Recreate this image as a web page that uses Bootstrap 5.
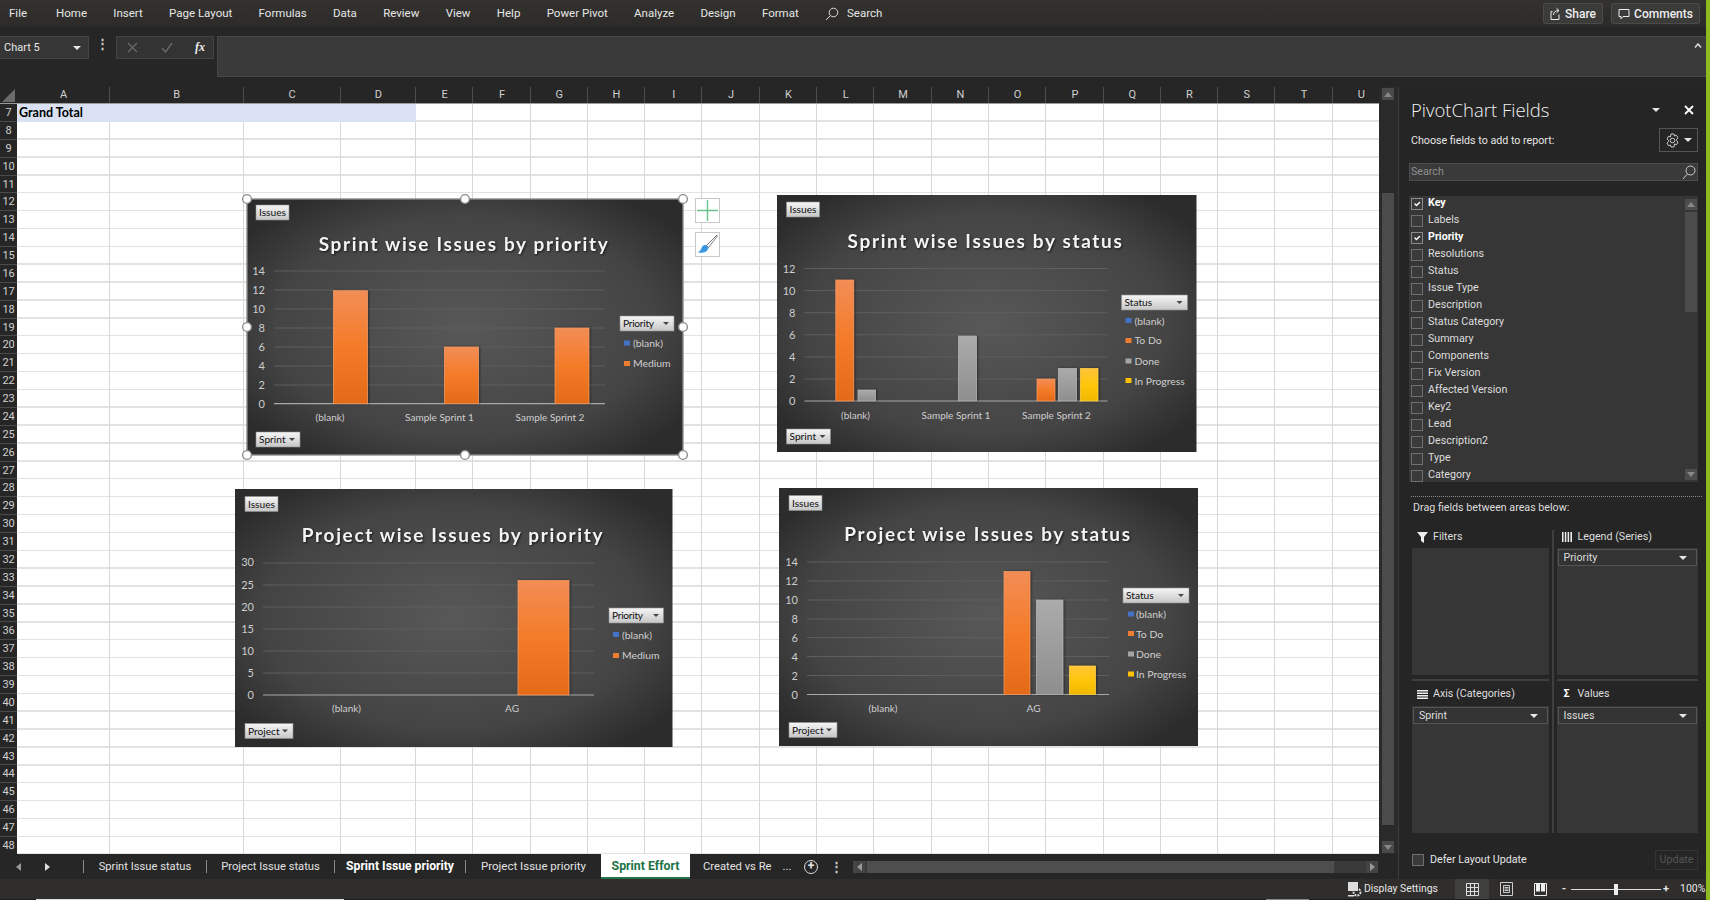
<!DOCTYPE html>
<html lang="en"><head><meta charset="utf-8"><title>Excel</title>
<link href="https://cdn.jsdelivr.net/npm/bootstrap@5.3.0/dist/css/bootstrap.min.css" rel="stylesheet">
<style>
html,body{height:900px;overflow:hidden;background:#262626}
body{font-family:Roboto,"Liberation Sans",sans-serif;font-size:11px;color:#e6e6e6;line-height:1.2}
.app{width:1706px;height:900px}
.edge{width:4px;height:900px;background:#8dbb20}
.ribbon{height:27px;background:linear-gradient(#33322f,#2c2b29);padding-left:9px;box-shadow:0 1px 2px #1a1a1a;font-size:11.5px}
.rib-item{margin-right:26.3px;white-space:nowrap}
.rib-item:first-child{margin-right:29px}
.rib-btn{height:21px;padding:0;background:#3b3b3a;border:1px solid #4a4a49;border-radius:2px;color:#eee;font-size:12px;font-weight:500;line-height:1;gap:4px;justify-content:center}
.rib-share{width:60px;margin-right:8px}
.rib-comments{width:89px;margin-right:6px}
.fbar{height:60px;padding-top:9px;background:#262626}
.namebox{width:89px;height:23px;background:#363636;border:1px solid #444;border-left:0;padding:0 7px 0 4px}
.dots{width:27px;color:#ccc;font-weight:700;font-size:13px;text-align:center}
.fxgrp{width:98px;height:23px;background:#333;border:1px solid #444;padding:0 8px 0 10px}
.fx{font-family:"Liberation Serif",serif;font-size:12px;font-style:italic;color:#eee;font-weight:700}
.fxinput{height:41px;margin:0 0 0 3px;background:#3a3a3a;border:1px solid #474747;border-right:0;flex:1;position:relative}
.caret-up{position:absolute;right:4px;top:6px}
.tri{display:inline-block;width:0;height:0;border-left:4px solid transparent;border-right:4px solid transparent;border-top:4px solid #e6e6e6}
.midrow{height:792px}
.leftcol{width:1398px}
.sheetcol{width:1379px;overflow:hidden}
.colhdr{height:17px;background:#262626;border-bottom:1px solid #9a9a9a}
.corner{flex:0 0 17px;position:relative}
.corner svg{position:absolute;left:2px;top:2px}
.cols{display:flex;overflow:hidden;flex:1}
.cols>div{flex:0 0 57.3px;border-right:1px solid #d6d6d6}
.cols>div:nth-child(1){flex-basis:93px}
.cols>div:nth-child(2){flex-basis:133.5px}
.cols>div:nth-child(3){flex-basis:97px}
.cols>div:nth-child(4){flex-basis:75.5px}
.colhdr .cols>div{border-right-color:#4d4d4d;text-align:center;color:#d0d0d0;line-height:15px;padding-left:1px}
.sheetbody{height:750px}
.rowhdr{flex:0 0 17px;background:#262626;overflow:hidden}
.rowhdr div{height:17.88px;line-height:17.88px;text-align:center;color:#d0d0d0;font-size:11px;border-bottom:1px solid #4a4a4a}
.rowhdr div.rh-narrow{letter-spacing:-.3px}
.canvas{flex:1;background:#fff repeating-linear-gradient(to bottom,transparent 0,transparent 16.4px,#e2e2e2 16.4px,#e2e2e2 17.88px);overflow:hidden}
.canvas .cols{height:100%}
.canvas .cols>div{border-right-color:#d8d8d8}
.gtotal{left:0;top:0;width:399px;height:18px;background:#d9e1f2;color:#000;font:700 12.5px/18px Lato,sans-serif;padding-left:2px}
.chart{position:absolute;overflow:visible}
#c1{left:230px;top:95px;width:436px;height:256px}
#c2{left:759.5px;top:91px;width:419.5px;height:257px}
#c3{left:218px;top:385px;width:437.5px;height:258px}
#c4{left:762px;top:384px;width:419px;height:258px}
.chart text{font-family:Lato,sans-serif}
.gl{stroke:#5f5f5f;stroke-width:1;fill:none}
.ax{stroke:#a8a8a8;stroke-width:1.2}
.tk{font-size:11px;fill:#cdcdcd;text-anchor:end}
.cat{font-size:10px;fill:#cfcfcf;text-anchor:middle}
.lg{font-size:10.4px;fill:#cfcfcf}
.ttl{font-size:19px;font-weight:700;fill:#f4f4f4;text-anchor:middle;letter-spacing:1.65px;filter:drop-shadow(1px 1.5px 1px rgba(0,0,0,.65))}
.fbtn{fill:url(#gbtn);stroke:#8f8f8f;stroke-width:.6}
.bt{font-size:10.2px;fill:#111}
.ftri{fill:#444}
.bar{stroke-width:.8;filter:drop-shadow(1px 0 1px rgba(0,0,0,.45))}
.hd{fill:#fff;stroke:#8d8d8d;stroke-width:1.4}
.toolbtn{width:25px;height:25px;background:#fff;border:1px solid #c8c8c8}
#tb1{left:678px;top:94px}
#tb2{left:678px;top:128px}
.vscroll{width:19px;background:#2a2a2a;padding:1px 4px 0 3px;height:767px}
.arrowbox{height:12px;background:#4a4a4a;display:flex;align-items:center;justify-content:center}
.vthumb{margin-top:93px;height:632px;background:#4b4b4b}
.tabsrow{height:25px;background:#262626;font-size:11.2px}
.navarrows{width:83px;flex:0 0 83px}
.tabsep{width:1px;height:13px;background:#8a8a8a}
.stab{white-space:nowrap;color:#e2e2e2;text-align:center}
.st1{width:122px}.st2{width:127px}.st3{width:130px;font-size:12.2px}.st4{width:135px;font-size:11.5px}
.st5{width:106px;padding-left:13px;text-align:left}
.stab-active{background:#fff;color:#217346;font-weight:700;font-size:12.3px;height:25px;margin-top:-1px;line-height:24px;border-bottom:2px solid #217346;width:89px;text-align:center;white-space:nowrap}
.pluscirc{width:14px;height:14px;border:1.4px solid #ddd;border-radius:50%;line-height:10px;text-align:center;font-weight:700;font-size:12px;color:#e6e6e6;margin-left:8px}
.tabdots{width:12px;margin-left:12px;color:#ccc;font-weight:700;font-size:13px;text-align:center}
.hscroll{height:12px;background:#3a3a3a;width:525px;margin-left:auto;margin-right:20px}
.hthumb{flex:1;background:#4e4e4e;margin:0 32px 0 2px;height:100%}
.harrow{width:12px;height:12px;background:#444;display:flex;align-items:center;justify-content:center}
.panel{width:308px;background:#252525;border-left:1px solid #3d3d3d;padding:0 8px 0 10px;font-size:10.7px}
.pv-title{font-family:"Open Sans",sans-serif;font-size:18.5px;font-weight:300;color:#f2f2f2;height:24px;margin-top:11px;padding-left:2px;line-height:24px}
.pv-choose{height:24px;margin-top:6px;padding-left:2px}
.pv-choose>span{padding-top:2px}
.gearbtn{width:39px;height:24px;border:1px solid #555;gap:4px}
.pv-search{height:18px;margin-top:11px;background:#3a3a3a;border:1px solid #4c4c4c;color:#8f8f8f;padding:0 1px}
.fieldbox{height:286px;margin-top:15px;background:#363636;overflow:hidden}
.fieldbox ul{margin:-1px 0 0 2px;padding:0;list-style:none}
.fieldbox li{height:17px;gap:5px;color:#ddd}
.fieldbox .form-check-input,.deferrow .form-check-input{width:12px;height:12px;margin:0;border-radius:0;background-color:#3a3a3a;border:1px solid #6f6f6f;flex:none}
.fieldbox .form-check-input:checked{background-color:#3a3a3a;border-color:#8a8a8a}
.fsb{top:3px;right:1px;width:12px;bottom:2px}
.fsb .thumb2{height:100px;margin-top:2px;background:#4c4c4c}
.fsb .arrowbox{height:11px;background:#4d4d4d}
.dotline{border-top:1px dotted #888;margin:14px -4px 0 2px;height:0}
.dragtxt{height:17px;line-height:17px;margin:2px 0 0 4px;color:#dedede}
.areas{margin:14px 0 0 3px;width:286px;height:303px}
.areacol-l{width:142px;border-right:2px solid #3f3f3f;padding-right:3px}
.areacol-r{width:144px;padding-left:2.5px}
.area1{height:151px;border-bottom:2px solid #3f3f3f}
.area2{height:152px;padding-top:4px}
.atitle{gap:5px;padding-left:4px;color:#dedede}
.area1 .atitle{height:14px;margin-bottom:4px}
.area2 .atitle{height:18px}
.area1 .abox{height:127px}
.area2 .abox{height:127px;margin-top:3px}
.abox{background:#363636;padding:1px}
.adrop{height:17px;background:#333;border:1px solid #555;padding:1px 9px 0 5px;color:#ddd}
.aicon{width:12px;display:inline-flex;justify-content:center}
.deferrow{height:20px;margin:17px 0 0 3px}
.defertxt{margin-left:6px}
.updbtn{width:43px;height:20px;border:1px solid #333;color:#565656;text-align:center;line-height:18px}
.status{height:20px;background:#2f2e2c;font-size:11px}
.dstxt{margin:0 17px 0 2px;font-size:10.4px}
.viewbtn{width:34px;height:20px}
.viewbtn.on{background:#3f3f3e}
.zm{width:6px;margin-left:4px;font-weight:700;text-align:center}
.zoombar{width:90px;height:1px;background:#ddd;position:relative;margin:0 2px 0 4px}
.zthumb{position:absolute;left:43px;top:-5px;width:4px;height:11px;background:#eee}
.zpct{margin:0 3px 0 11px;width:23px;font-size:10.5px;white-space:nowrap}
.zplus{margin-left:0}
.bottomline{height:1px;background:#1e1e1e}
.bl1{margin-left:36px;width:308px;background:#ddd}
.bl2{margin-left:922px;width:43px;background:#888}
</style></head>
<body>
<svg width="0" height="0" class="position-absolute"><defs>
<radialGradient id="gbg" cx=".5" cy=".5" r=".62"><stop offset="0" stop-color="#585858"/><stop offset=".7" stop-color="#444"/><stop offset="1" stop-color="#2c2c2c"/></radialGradient>
<linearGradient id="gor" x1="0" y1="0" x2="0" y2="1"><stop offset="0" stop-color="#f28d56"/><stop offset=".5" stop-color="#f47b28"/><stop offset="1" stop-color="#e36a17"/></linearGradient>
<linearGradient id="ggr" x1="0" y1="0" x2="0" y2="1"><stop offset="0" stop-color="#ababab"/><stop offset="1" stop-color="#8e8e8e"/></linearGradient>
<linearGradient id="gye" x1="0" y1="0" x2="0" y2="1"><stop offset="0" stop-color="#ffc53a"/><stop offset=".5" stop-color="#ffc60a"/><stop offset="1" stop-color="#efb800"/></linearGradient>
<linearGradient id="gbtn" x1="0" y1="0" x2="0" y2="1"><stop offset="0" stop-color="#f6f6f6"/><stop offset="1" stop-color="#c6c6c6"/></linearGradient>
</defs></svg>
<div class="d-flex">
<div class="app d-flex flex-column">
  <div class="ribbon d-flex align-items-center">
    <span class="rib-item">File</span><span class="rib-item">Home</span><span class="rib-item">Insert</span><span class="rib-item">Page Layout</span><span class="rib-item">Formulas</span><span class="rib-item">Data</span><span class="rib-item">Review</span><span class="rib-item">View</span><span class="rib-item">Help</span><span class="rib-item">Power Pivot</span><span class="rib-item">Analyze</span><span class="rib-item">Design</span><span class="rib-item">Format</span>
    <span class="d-flex align-items-center gap-2 flex-grow-1"><svg width="14" height="14" viewBox="0 0 14 14" fill="none" stroke="#ddd" stroke-width="1"><circle cx="8.5" cy="5.5" r="4.3"/><path d="M5.4 8.6 1 13"/></svg>Search</span>
    <button class="btn rib-btn rib-share d-flex align-items-center"><svg width="11" height="13" viewBox="0 0 11 13" fill="none" stroke="#eee" stroke-width="1"><path d="M2.5 4.5H1v8h8v-5M3.5 8c0-3 2-4.5 5-4.5M6.5 1.2 9 3.5 6.5 5.8"/></svg>Share</button>
    <button class="btn rib-btn rib-comments d-flex align-items-center"><svg width="12" height="12" viewBox="0 0 12 12" fill="none" stroke="#eee" stroke-width="1"><path d="M1 1.5h10v7H5L3 10.8V8.5H1z"/></svg>Comments</button>
  </div>
  <div class="fbar d-flex align-items-start">
    <div class="namebox d-flex align-items-center justify-content-between"><span>Chart 5</span><span class="tri"></span></div>
    <div class="dots">⋮</div>
    <div class="fxgrp d-flex align-items-center justify-content-between">
      <svg width="11" height="11" viewBox="0 0 11 11" stroke="#6a6a6a" stroke-width="1.2"><path d="M1 1l9 9M10 1l-9 9"/></svg>
      <svg width="12" height="11" viewBox="0 0 12 11" fill="none" stroke="#6a6a6a" stroke-width="1.4"><path d="M1 6l3.5 4L11 1"/></svg>
      <span class="fx">fx</span>
    </div>
    <div class="fxinput"><svg class="caret-up" width="8" height="5" viewBox="0 0 8 5" fill="none" stroke="#ddd" stroke-width="1.5"><path d="M1 4.5 4 1l3 3.5"/></svg></div>
  </div>
  <div class="midrow d-flex">
    <div class="leftcol d-flex flex-column">
      <div class="d-flex flex-grow-0">
        <div class="sheetcol flex-shrink-0">
          <div class="colhdr d-flex">
            <div class="corner"><svg width="13" height="13"><path d="M13 0V13H0z" fill="#6b6b6b"/></svg></div>
            <div class="cols"><div>A</div><div>B</div><div>C</div><div>D</div><div>E</div><div>F</div><div>G</div><div>H</div><div>I</div><div>J</div><div>K</div><div>L</div><div>M</div><div>N</div><div>O</div><div>P</div><div>Q</div><div>R</div><div>S</div><div>T</div><div>U</div></div>
          </div>
          <div class="sheetbody d-flex">
            <div class="rowhdr"><div>7</div><div>8</div><div>9</div><div class="rh-narrow">10</div><div class="rh-narrow">11</div><div class="rh-narrow">12</div><div class="rh-narrow">13</div><div class="rh-narrow">14</div><div class="rh-narrow">15</div><div class="rh-narrow">16</div><div class="rh-narrow">17</div><div class="rh-narrow">18</div><div class="rh-narrow">19</div><div class="rh-narrow">20</div><div class="rh-narrow">21</div><div class="rh-narrow">22</div><div class="rh-narrow">23</div><div class="rh-narrow">24</div><div class="rh-narrow">25</div><div class="rh-narrow">26</div><div class="rh-narrow">27</div><div class="rh-narrow">28</div><div class="rh-narrow">29</div><div class="rh-narrow">30</div><div class="rh-narrow">31</div><div class="rh-narrow">32</div><div class="rh-narrow">33</div><div class="rh-narrow">34</div><div class="rh-narrow">35</div><div class="rh-narrow">36</div><div class="rh-narrow">37</div><div class="rh-narrow">38</div><div class="rh-narrow">39</div><div class="rh-narrow">40</div><div class="rh-narrow">41</div><div class="rh-narrow">42</div><div class="rh-narrow">43</div><div class="rh-narrow">44</div><div class="rh-narrow">45</div><div class="rh-narrow">46</div><div class="rh-narrow">47</div><div class="rh-narrow">48</div></div>
            <div class="canvas position-relative">
              <div class="cols"><div></div><div></div><div></div><div></div><div></div><div></div><div></div><div></div><div></div><div></div><div></div><div></div><div></div><div></div><div></div><div></div><div></div><div></div><div></div><div></div><div></div></div>
              <div class="gtotal position-absolute">Grand Total</div>

              <svg id="c1" class="chart" viewBox="247 199 436 256">
                <rect x="247" y="199" width="436" height="256" fill="url(#gbg)" stroke="#8a8a8a" stroke-width="1.4"/>
                <path class="gl" d="M274 271H605M274 290H605M274 309H605M274 328H605M274 347H605M274 366H605M274 385H605"/>
                <path class="ax" d="M274 403.7H605"/>
                <rect class="bar" x="333.5" y="290.7" width="34" height="113" fill="url(#gor)" stroke="#f59a64"/>
                <rect class="bar" x="444.5" y="347" width="34" height="56.7" fill="url(#gor)" stroke="#f59a64"/>
                <rect class="bar" x="555" y="328" width="34" height="75.7" fill="url(#gor)" stroke="#f59a64"/>
                <text class="ttl" x="464" y="251">Sprint wise Issues by priority</text>
                <text class="tk" x="265" y="275">14</text><text class="tk" x="265" y="294">12</text><text class="tk" x="265" y="313">10</text><text class="tk" x="265" y="332">8</text><text class="tk" x="265" y="351">6</text><text class="tk" x="265" y="370">4</text><text class="tk" x="265" y="389">2</text><text class="tk" x="265" y="408">0</text>
                <text class="cat" x="330" y="421">(blank)</text><text class="cat" x="439.5" y="421">Sample Sprint 1</text><text class="cat" x="550" y="421">Sample Sprint 2</text>
                <rect class="fbtn" x="256" y="205" width="33" height="15"/><text class="bt" x="259" y="216">Issues</text>
                <rect class="fbtn" x="256" y="432" width="44" height="15"/><text class="bt" x="259" y="443">Sprint</text><path class="ftri" d="M289 438h6l-3 3z"/>
                <rect class="fbtn" x="620" y="316" width="54" height="15"/><text class="bt" x="623" y="327" textLength="31">Priority</text><path class="ftri" d="M663 322h6l-3 3z"/>
                <rect x="624" y="340.5" width="6" height="5" fill="#4472c4"/><text class="lg" x="633" y="347">(blank)</text>
                <rect x="624" y="361" width="6" height="5" fill="#ed7d31"/><text class="lg" x="633" y="367">Medium</text>
                <circle class="hd" cx="247" cy="199" r="4.4"/><circle class="hd" cx="465" cy="199" r="4.4"/><circle class="hd" cx="683" cy="199" r="4.4"/><circle class="hd" cx="247" cy="327" r="4.4"/><circle class="hd" cx="683" cy="327" r="4.4"/><circle class="hd" cx="247" cy="455" r="4.4"/><circle class="hd" cx="465" cy="455" r="4.4"/><circle class="hd" cx="683" cy="455" r="4.4"/>
              </svg>
              <div id="tb1" class="toolbtn position-absolute d-flex align-items-center justify-content-center"><svg width="21" height="21" viewBox="0 0 21 21" stroke="#6cc28c" stroke-width="1.4"><path d="M10.5 0v21M0 10.5h21"/></svg></div>
              <div id="tb2" class="toolbtn position-absolute d-flex align-items-center justify-content-center"><svg width="21" height="21" viewBox="0 0 21 21"><path d="M20 1 9.5 11.5l2 2L20 2.5z" fill="#fff" stroke="#6f6f6f" stroke-width=".9"/><path d="M9 11c-2.5-.5-4 1-4.5 3-.4 1.8-2 3.2-3.5 4.5 4 .8 9.500.3 10.500-5z" fill="#3b97e0"/></svg></div>

              <svg id="c2" class="chart" viewBox="776.5 195 419.5 257">
                <rect x="776.5" y="195" width="419.5" height="257" fill="url(#gbg)"/>
                <path class="gl" d="M804 268.5H1107M804 290.6H1107M804 312.7H1107M804 334.8H1107M804 356.9H1107M804 379H1107"/>
                <path class="ax" d="M804 401H1107"/>
                <rect class="bar" x="835.3" y="280" width="18" height="121" fill="url(#gor)" stroke="#f59a64"/>
                <rect class="bar" x="857.5" y="390" width="17.5" height="11" fill="url(#ggr)" stroke="#b5b5b5"/>
                <rect class="bar" x="958" y="336" width="18" height="65" fill="url(#ggr)" stroke="#b5b5b5"/>
                <rect class="bar" x="1036.5" y="379" width="18" height="22" fill="url(#gor)" stroke="#f59a64"/>
                <rect class="bar" x="1058" y="368.5" width="18" height="32.5" fill="url(#ggr)" stroke="#b5b5b5"/>
                <rect class="bar" x="1080" y="368.5" width="17.5" height="32.5" fill="url(#gye)" stroke="#ffd04a"/>
                <text class="ttl" x="985" y="248">Sprint wise Issues by status</text>
                <text class="tk" x="795" y="272.5">12</text><text class="tk" x="795" y="294.5">10</text><text class="tk" x="795" y="316.5">8</text><text class="tk" x="795" y="339">6</text><text class="tk" x="795" y="361">4</text><text class="tk" x="795" y="383">2</text><text class="tk" x="795" y="405">0</text>
                <text class="cat" x="855" y="418.5">(blank)</text><text class="cat" x="955.5" y="418.5">Sample Sprint 1</text><text class="cat" x="1056" y="418.5">Sample Sprint 2</text>
                <rect class="fbtn" x="786" y="202" width="33" height="15"/><text class="bt" x="789" y="213">Issues</text>
                <rect class="fbtn" x="786" y="429" width="44" height="15"/><text class="bt" x="789" y="440">Sprint</text><path class="ftri" d="M819 435h6l-3 3z"/>
                <rect class="fbtn" x="1121" y="295" width="66" height="15"/><text class="bt" x="1124" y="306">Status</text><path class="ftri" d="M1176 301h6l-3 3z"/>
                <rect x="1125" y="318" width="6" height="5" fill="#4472c4"/><text class="lg" x="1134" y="324.5">(blank)</text>
                <rect x="1125" y="338" width="6" height="5" fill="#ed7d31"/><text class="lg" x="1134" y="344">To Do</text>
                <rect x="1125" y="358.5" width="6" height="5" fill="#a5a5a5"/><text class="lg" x="1134" y="365">Done</text>
                <rect x="1125" y="378" width="6" height="5" fill="#ffc000"/><text class="lg" x="1134" y="384.5">In Progress</text>
              </svg>

              <svg id="c3" class="chart" viewBox="235 489 437.5 258">
                <rect x="235" y="489" width="437.5" height="258" fill="url(#gbg)"/>
                <path class="gl" d="M263 563H594M263 585H594M263 607H594M263 629H594M263 651H594M263 673H594"/>
                <path class="ax" d="M263 695H594"/>
                <rect class="bar" x="518" y="580.5" width="51" height="114.5" fill="url(#gor)" stroke="#f59a64"/>
                <text class="ttl" x="453" y="542">Project wise Issues by priority</text>
                <text class="tk" x="254" y="566">30</text><text class="tk" x="254" y="589">25</text><text class="tk" x="254" y="611">20</text><text class="tk" x="254" y="633">15</text><text class="tk" x="254" y="655">10</text><text class="tk" x="254" y="677">5</text><text class="tk" x="254" y="699">0</text>
                <text class="cat" x="346.5" y="712">(blank)</text><text class="cat" x="512" y="712">AG</text>
                <rect class="fbtn" x="245" y="496.5" width="33" height="15"/><text class="bt" x="248" y="507.5">Issues</text>
                <rect class="fbtn" x="245" y="723.5" width="48" height="15"/><text class="bt" x="248" y="734.5">Project</text><path class="ftri" d="M282 729.5h6l-3 3z"/>
                <rect class="fbtn" x="609" y="608" width="54.5" height="15"/><text class="bt" x="612" y="619" textLength="31">Priority</text><path class="ftri" d="M653 614h6l-3 3z"/>
                <rect x="613" y="632" width="6" height="5" fill="#4472c4"/><text class="lg" x="622" y="638.5">(blank)</text>
                <rect x="613" y="653" width="6" height="5" fill="#ed7d31"/><text class="lg" x="622" y="659">Medium</text>
              </svg>

              <svg id="c4" class="chart" viewBox="779 488 419 258">
                <rect x="779" y="488" width="419" height="258" fill="url(#gbg)"/>
                <path class="gl" d="M807 562H1109M807 581H1109M807 600H1109M807 619H1109M807 637.6H1109M807 656.5H1109M807 675.5H1109"/>
                <path class="ax" d="M807 694.5H1109"/>
                <rect class="bar" x="1004" y="571.5" width="26" height="123" fill="url(#gor)" stroke="#f59a64"/>
                <rect class="bar" x="1036.5" y="600" width="26.5" height="94.5" fill="url(#ggr)" stroke="#b5b5b5"/>
                <rect class="bar" x="1069.5" y="666" width="26" height="28.5" fill="url(#gye)" stroke="#ffd04a"/>
                <text class="ttl" x="988" y="541">Project wise Issues by status</text>
                <text class="tk" x="798" y="566">14</text><text class="tk" x="798" y="585">12</text><text class="tk" x="798" y="604">10</text><text class="tk" x="798" y="623">8</text><text class="tk" x="798" y="641.5">6</text><text class="tk" x="798" y="660.5">4</text><text class="tk" x="798" y="679.5">2</text><text class="tk" x="798" y="698.5">0</text>
                <text class="cat" x="883" y="712">(blank)</text><text class="cat" x="1033.5" y="712">AG</text>
                <rect class="fbtn" x="789" y="495.5" width="33" height="15"/><text class="bt" x="792" y="506.5">Issues</text>
                <rect class="fbtn" x="789" y="722.5" width="48" height="15"/><text class="bt" x="792" y="733.5">Project</text><path class="ftri" d="M826 728.5h6l-3 3z"/>
                <rect class="fbtn" x="1123" y="588" width="66" height="15"/><text class="bt" x="1126" y="599">Status</text><path class="ftri" d="M1178 594h6l-3 3z"/>
                <rect x="1128" y="611.5" width="6" height="5" fill="#4472c4"/><text class="lg" x="1136" y="618">(blank)</text>
                <rect x="1128" y="631" width="6" height="5" fill="#ed7d31"/><text class="lg" x="1136" y="637.5">To Do</text>
                <rect x="1128" y="651.5" width="6" height="5" fill="#a5a5a5"/><text class="lg" x="1136" y="658">Done</text>
                <rect x="1128" y="671.5" width="6" height="5" fill="#ffc000"/><text class="lg" x="1136" y="677.5">In Progress</text>
              </svg>
            </div>
          </div>
        </div>
        <div class="vscroll flex-shrink-0">
          <div class="arrowbox"><svg width="8" height="5"><path d="M4 0l4 5H0z" fill="#888"/></svg></div>
          <div class="vthumb"></div>
          <div class="arrowbox mt-3"><svg width="8" height="5"><path d="M4 5l4-5H0z" fill="#888"/></svg></div>
        </div>
      </div>
      <div class="tabsrow d-flex align-items-center">
        <div class="navarrows d-flex align-items-center"><svg class="ms-3" width="5" height="8"><path d="M0 4l5-4v8z" fill="#999"/></svg><svg class="ms-4" width="5" height="8"><path d="M5 4L0 0v8z" fill="#ddd"/></svg></div>
        <span class="tabsep"></span><span class="stab st1">Sprint Issue status</span>
        <span class="tabsep"></span><span class="stab st2">Project Issue status</span>
        <span class="tabsep"></span><span class="stab st3 fw-bold text-white">Sprint Issue priority</span>
        <span class="tabsep"></span><span class="stab st4">Project Issue priority</span>
        <span class="stab-active">Sprint Effort</span>
        <span class="stab st5">Created vs Re&nbsp;&nbsp;&nbsp;&nbsp;...</span>
        <span class="pluscirc">+</span>
        <span class="tabdots">⋮</span>
        <div class="hscroll d-flex"><div class="harrow"><svg width="5" height="8"><path d="M0 4l5-4v8z" fill="#999"/></svg></div><div class="hthumb"></div><div class="harrow"><svg width="5" height="8"><path d="M5 4L0 0v8z" fill="#999"/></svg></div></div>
      </div>
    </div>
    <aside class="panel d-flex flex-column">
      <div class="pv-title d-flex align-items-center justify-content-between"><span>PivotChart Fields</span><span class="d-flex align-items-center"><span class="tri"></span><svg class="ms-4 me-1" width="10" height="10" viewBox="0 0 10 10" stroke="#fff" stroke-width="1.8"><path d="M1 1l8 8M9 1L1 9"/></svg></span></div>
      <div class="pv-choose d-flex align-items-center justify-content-between"><span>Choose fields to add to report:</span>
        <div class="gearbtn d-flex align-items-center justify-content-center"><svg width="15" height="15" viewBox="0 0 15 15" fill="none" stroke="#ccc"><circle cx="7.5" cy="7.5" r="2.3"/><path d="M6 1h3l.5 2 2-.7 1.5 2.6-1.5 1.4v1.4l1.5 1.4-1.5 2.6-2-.7L9 14H6l-.5-2-2 .7L2 10.1l1.5-1.4V7.3L2 5.9l1.5-2.6 2 .7z"/></svg><span class="tri"></span></div></div>
      <div class="pv-search d-flex align-items-center justify-content-between"><span>Search</span><svg width="14" height="15" viewBox="0 0 14 15" fill="none" stroke="#ccc"><circle cx="8.5" cy="5.5" r="4.5"/><path d="M5.3 9 1 14"/></svg></div>
      <div class="fieldbox position-relative">
        <ul>
          <li class="d-flex align-items-center"><input class="form-check-input" type="checkbox" checked aria-label="Key"><strong class="text-white">Key</strong></li>
          <li class="d-flex align-items-center"><input class="form-check-input" type="checkbox" aria-label="Labels"><span>Labels</span></li>
          <li class="d-flex align-items-center"><input class="form-check-input" type="checkbox" checked aria-label="Priority"><strong class="text-white">Priority</strong></li>
          <li class="d-flex align-items-center"><input class="form-check-input" type="checkbox" aria-label="Resolutions"><span>Resolutions</span></li>
          <li class="d-flex align-items-center"><input class="form-check-input" type="checkbox" aria-label="Status"><span>Status</span></li>
          <li class="d-flex align-items-center"><input class="form-check-input" type="checkbox" aria-label="Issue Type"><span>Issue Type</span></li>
          <li class="d-flex align-items-center"><input class="form-check-input" type="checkbox" aria-label="Description"><span>Description</span></li>
          <li class="d-flex align-items-center"><input class="form-check-input" type="checkbox" aria-label="Status Category"><span>Status Category</span></li>
          <li class="d-flex align-items-center"><input class="form-check-input" type="checkbox" aria-label="Summary"><span>Summary</span></li>
          <li class="d-flex align-items-center"><input class="form-check-input" type="checkbox" aria-label="Components"><span>Components</span></li>
          <li class="d-flex align-items-center"><input class="form-check-input" type="checkbox" aria-label="Fix Version"><span>Fix Version</span></li>
          <li class="d-flex align-items-center"><input class="form-check-input" type="checkbox" aria-label="Affected Version"><span>Affected Version</span></li>
          <li class="d-flex align-items-center"><input class="form-check-input" type="checkbox" aria-label="Key2"><span>Key2</span></li>
          <li class="d-flex align-items-center"><input class="form-check-input" type="checkbox" aria-label="Lead"><span>Lead</span></li>
          <li class="d-flex align-items-center"><input class="form-check-input" type="checkbox" aria-label="Description2"><span>Description2</span></li>
          <li class="d-flex align-items-center"><input class="form-check-input" type="checkbox" aria-label="Type"><span>Type</span></li>
          <li class="d-flex align-items-center"><input class="form-check-input" type="checkbox" aria-label="Category"><span>Category</span></li>
        </ul>
        <div class="fsb position-absolute d-flex flex-column"><div class="arrowbox"><svg width="8" height="5"><path d="M4 0l4 5H0z" fill="#888"/></svg></div><div class="thumb2"></div><div class="arrowbox mt-auto"><svg width="8" height="5"><path d="M4 5l4-5H0z" fill="#888"/></svg></div></div>
      </div>
      <div class="dotline"></div>
      <div class="dragtxt">Drag fields between areas below:</div>
      <div class="areas d-flex">
        <div class="areacol-l">
          <div class="area1">
            <div class="atitle d-flex align-items-center"><span class="aicon"><svg width="11" height="11" viewBox="0 0 11 11"><path d="M0 0h11L7 5v6L4 9V5z" fill="#eee"/></svg></span>Filters</div>
            <div class="abox"></div>
          </div>
          <div class="area2">
            <div class="atitle d-flex align-items-center"><span class="aicon"><svg width="11" height="9" viewBox="0 0 11 9" fill="#eee"><path d="M0 0h11v1.5H0zM0 2.5h11V4H0zM0 5h11v1.5H0zM0 7.500h11V9H0z"/></svg></span>Axis (Categories)</div>
            <div class="abox"><div class="adrop d-flex align-items-center justify-content-between"><span>Sprint</span><span class="tri"></span></div></div>
          </div>
        </div>
        <div class="areacol-r">
          <div class="area1">
            <div class="atitle d-flex align-items-center"><span class="aicon"><svg width="10" height="10" viewBox="0 0 10 10" fill="#eee"><path d="M0 0h1.500v10H0zM2.800 0h1.500v10H2.800zM5.600 0h1.500v10H5.600zM8.400 0H10v10H8.400z"/></svg></span>Legend (Series)</div>
            <div class="abox"><div class="adrop d-flex align-items-center justify-content-between"><span>Priority</span><span class="tri"></span></div></div>
          </div>
          <div class="area2">
            <div class="atitle d-flex align-items-center"><span class="aicon fw-bold text-white">Σ</span>Values</div>
            <div class="abox"><div class="adrop d-flex align-items-center justify-content-between"><span>Issues</span><span class="tri"></span></div></div>
          </div>
        </div>
      </div>
      <div class="deferrow d-flex align-items-center"><input class="form-check-input" type="checkbox" aria-label="Defer Layout Update"><span class="defertxt flex-grow-1">Defer Layout Update</span><span class="updbtn">Update</span></div>
    </aside>
  </div>
  <div class="status d-flex align-items-center justify-content-end">
    <svg width="14" height="15" viewBox="0 0 14 15"><rect x="0" y="0" width="10" height="9" fill="#ddd"/><circle cx="9" cy="10" r="3.5" fill="none" stroke="#ddd" stroke-width="2" stroke-dasharray="2 1"/><path d="M0 13h6v1.5H0z" fill="#ddd"/></svg>
    <span class="dstxt">Display Settings</span>
    <span class="viewbtn on d-flex align-items-center justify-content-center"><svg width="13" height="13" viewBox="0 0 13 13" fill="none" stroke="#ddd"><path d="M.5.5h12v12H.5zM4.500.5v12M8.500.5v12M.5 4.500h12M.5 8.500h12"/></svg></span>
    <span class="viewbtn d-flex align-items-center justify-content-center"><svg width="13" height="14" viewBox="0 0 13 14" fill="none" stroke="#ccc"><path d="M.5.5h12v13H.5zM3.500 3.500h6v7h-6zM4.500 5.500h4M4.500 7h4M4.500 8.500h4"/></svg></span>
    <span class="viewbtn d-flex align-items-center justify-content-center"><svg width="13" height="13" viewBox="0 0 13 13"><path d="M.5.5h12v12H.5z" fill="none" stroke="#eee"/><path d="M2 1h4v7.5H2zM7 1h4v7.5H7z" fill="#eee"/></svg></span>
    <span class="zm">-</span><span class="zoombar"><span class="zthumb"></span></span><span class="zm zplus">+</span>
    <span class="zpct">100%</span>
  </div>
  <div class="bottomline d-flex"><span class="bl1"></span><span class="bl2"></span></div>
</div>
<div class="edge"></div>
</div>
</body></html>
